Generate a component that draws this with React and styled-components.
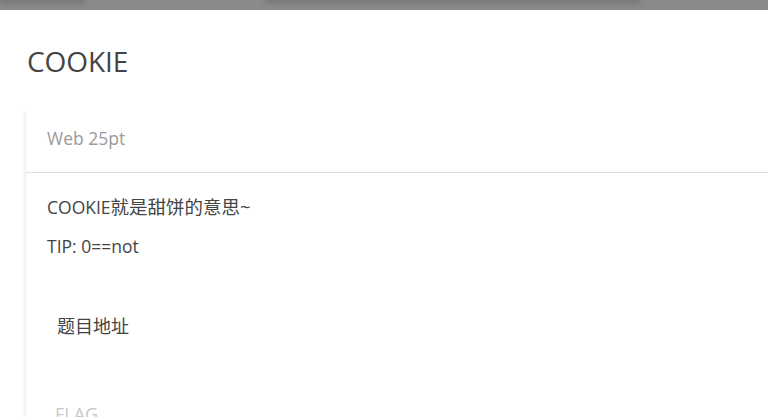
import React from "react";
import styled, { createGlobalStyle } from "styled-components";

const Global = createGlobalStyle`
  html, body { margin: 0; padding: 0; background: #fff; overflow: hidden; }
  body { font-family: "Open Sans", "Noto Sans CJK SC", sans-serif; }
`;

const Backdrop = styled.div`
  height: 10px;
  background: #8a8a8a;
  display: flex;
  overflow: hidden;
`;

const Ghost = styled.span`
  display: block;
  height: 3px;
  margin-left: ${(p) => p.$left}px;
  width: ${(p) => p.$width}px;
  background: #6f6f6f;
  filter: blur(2px);
`;

const Modal = styled.div`
  background: #fff;
  height: 407px;
  overflow: hidden;
`;

const Title = styled.h2`
  margin: 0;
  padding: 34px 0 0 27px;
  height: 60px;
  box-sizing: content-box;
  font-weight: 400;
  font-size: 28px;
  line-height: 34px;
  color: #444;
  letter-spacing: -0.1px;
`;

const Card = styled.div`
  margin-left: 26px;
  background: #fff;
  box-shadow: -3px 5px 4px -2px rgba(0, 0, 0, 0.1);
`;

const CardHeader = styled.div`
  height: 68px;
  display: flex;
  align-items: center;
  padding-left: 21px;
  border-bottom: 1px solid #dedede;
  font-size: 17.5px;
  color: #9a9a9a;
`;

const CardBody = styled.div`
  padding: 22px 21px 0;
  color: #444;
  font-size: 17.5px;
`;

const Line = styled.p`
  margin: 0 0 16px;
  line-height: 23px;
`;

const Han = styled.span`
  font-size: 18.5px;
`;

const TaskLink = styled.a`
  display: inline-block;
  margin: 41px 0 0 10px;
  color: #444;
  font-size: 18px;
  line-height: 23px;
  text-decoration: none;
`;

const FlagInput = styled.input`
  display: block;
  margin: 65px 0 0 0;
  padding: 0 8px;
  border: none;
  outline: none;
  font-family: inherit;
  font-size: 18px;
  line-height: 23px;
  color: #444;
  &::placeholder { color: #c8c8c8; }
`;

export default function App() {
  return (
    <>
      <Global />
      <Backdrop>
        <Ghost $left={0} $width={85} />
        <Ghost $left={180} $width={375} />
      </Backdrop>
      <Modal>
        <Title>COOKIE</Title>
        <Card>
          <CardHeader>Web 25pt</CardHeader>
          <CardBody>
            <Line>COOKIE<Han>就是甜饼的意思~</Han></Line>
            <Line>TIP: 0==not</Line>
            <TaskLink href="#">题目地址</TaskLink>
            <FlagInput placeholder="FLAG" />
          </CardBody>
        </Card>
      </Modal>
    </>
  );
}
